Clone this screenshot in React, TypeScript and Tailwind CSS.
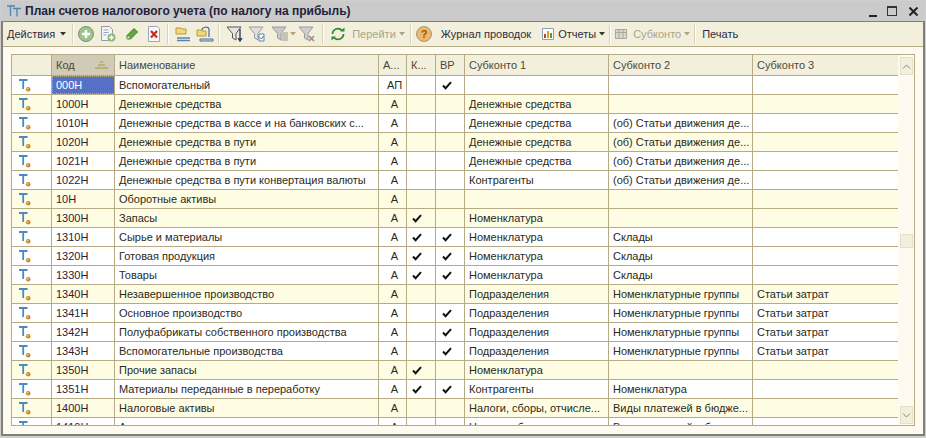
import React from "react";

type Row = {
  code: string;
  name: string;
  a: string;
  k?: boolean;
  vr?: boolean;
  s1?: string;
  s2?: string;
  s3?: string;
  folder?: boolean;
};

const rows: Row[] = [
  { code: "000Н", name: "Вспомогательный", a: "АП", vr: true },
  { code: "1000Н", name: "Денежные средства", a: "А", s1: "Денежные средства", folder: true },
  { code: "1010Н", name: "Денежные средства в кассе и на банковских с...", a: "А", s1: "Денежные средства", s2: "(об) Статьи движения де..." },
  { code: "1020Н", name: "Денежные средства в пути", a: "А", s1: "Денежные средства", s2: "(об) Статьи движения де...", folder: true },
  { code: "1021Н", name: "Денежные средства в пути", a: "А", s1: "Денежные средства", s2: "(об) Статьи движения де..." },
  { code: "1022Н", name: "Денежные средства в пути конвертация валюты", a: "А", s1: "Контрагенты", s2: "(об) Статьи движения де..." },
  { code: "10Н", name: "Оборотные активы", a: "А", folder: true },
  { code: "1300Н", name: "Запасы", a: "А", k: true, s1: "Номенклатура", folder: true },
  { code: "1310Н", name: "Сырье и материалы", a: "А", k: true, vr: true, s1: "Номенклатура", s2: "Склады" },
  { code: "1320Н", name: "Готовая продукция", a: "А", k: true, vr: true, s1: "Номенклатура", s2: "Склады" },
  { code: "1330Н", name: "Товары", a: "А", k: true, vr: true, s1: "Номенклатура", s2: "Склады" },
  { code: "1340Н", name: "Незавершенное производство", a: "А", s1: "Подразделения", s2: "Номенклатурные группы", s3: "Статьи затрат", folder: true },
  { code: "1341Н", name: "Основное производство", a: "А", vr: true, s1: "Подразделения", s2: "Номенклатурные группы", s3: "Статьи затрат" },
  { code: "1342Н", name: "Полуфабрикаты собственного производства", a: "А", vr: true, s1: "Подразделения", s2: "Номенклатурные группы", s3: "Статьи затрат" },
  { code: "1343Н", name: "Вспомогательные производства", a: "А", vr: true, s1: "Подразделения", s2: "Номенклатурные группы", s3: "Статьи затрат" },
  { code: "1350Н", name: "Прочие запасы", a: "А", k: true, s1: "Номенклатура", folder: true },
  { code: "1351Н", name: "Материалы переданные в переработку", a: "А", k: true, vr: true, s1: "Контрагенты", s2: "Номенклатура" },
  { code: "1400Н", name: "Налоговые активы", a: "А", s1: "Налоги, сборы, отчисле...", s2: "Виды платежей в бюдже...", folder: true },
  { code: "1410Н", name: "Акцизы", a: "А", s1: "Налоги, сборы, отчисле...", s2: "Виды платежей в бюдже..." },
];

const gridCols = "grid grid-cols-[40px_63px_264px_28px_29px_29px_144px_144px_145px]";

const AccountIcon = () => (
  <svg width="16" height="16" viewBox="0 0 16 16">
    <path d="M1 3h8.5M5.2 3v9" stroke="#4a8ac0" strokeWidth="1.8" fill="none" />
    <circle cx="10.2" cy="12.3" r="2.3" fill="#c4892c" />
    <circle cx="9.7" cy="11.8" r="0.9" fill="#f0d08a" />
  </svg>
);

const Check = () => (
  <svg width="10" height="9" viewBox="0 0 10 9">
    <path d="M1 4.5L3.6 7.2L9 1.2" stroke="#111" strokeWidth="2" fill="none" />
  </svg>
);

const Caret = ({ color = "#333", className = "" }: { color?: string; className?: string }) => (
  <svg width="6" height="4" viewBox="0 0 6 4" className={className}>
    <path d="M0 0h6L3 3.5z" fill={color} />
  </svg>
);

const Sep = ({ className = "" }: { className?: string }) => (
  <div className={`h-[20px] w-[2px] border-l border-[#d8d3b8] border-r-0 bg-white ${className}`} />
);

const Funnel = ({ color, dark }: { color: string; dark?: boolean }) => (
  <path d="M1 2h14L10 8.5V15L6.5 13V8.5z" fill={color} stroke={dark ? "#555" : "#9a9a9a"} strokeWidth="1" />
);

const cell = "flex items-center overflow-hidden whitespace-nowrap border-r border-[#b5ab84] pl-[4px]";

export default function App() {
  return (
    <div className="flex h-[438px] w-[926px] flex-col bg-[#cfcfcf] px-[1px] pt-[1px] pb-[2px] text-[11px] text-[#2b2a20] [font-family:'Liberation_Sans',Arial,sans-serif]">
      <div className="flex h-[20px] shrink-0 items-center bg-[#cbcbcb] pl-[5px] pr-[7px]">
        <svg width="16" height="14" viewBox="0 0 16 14">
          <path d="M1 2h8M4.5 2v10" stroke="#4a87b5" strokeWidth="1.3" fill="none" />
          <path d="M7 4.5h8M11 4.5v8" stroke="#4a87b5" strokeWidth="1.3" fill="none" />
        </svg>
        <span className="ml-[3px] text-[12px] font-bold text-[#22223a]">План счетов налогового учета (по налогу на прибыль)</span>
        <div className="ml-auto flex items-center">
          <div className="mt-[9px] h-[2px] w-[8px] bg-[#222]" />
          <div className="ml-[10px] h-[10px] w-[10px] border border-[#333] border-t-2" />
          <svg width="9" height="9" viewBox="0 0 9 9" className="ml-[12px]">
            <path d="M0.5 0.5l8 8M8.5 0.5l-8 8" stroke="#222" strokeWidth="2" />
          </svg>
        </div>
      </div>

      <div className="flex min-h-0 flex-1 flex-col border-x-2 border-b-2 border-t border-[#808078] bg-[#fffaef]">
        <div className="flex h-[25px] shrink-0 items-center border-b border-[#b5ab84] bg-[#f3efdd] pl-[4px] text-[#2d2c3c]">
          <span>Действия</span>
          <Caret className="ml-[5px]" />
          <Sep className="ml-[6px]" />
          <svg width="18" height="18" viewBox="0 0 18 18" className="ml-[3px]">
            <circle cx="9" cy="9" r="7.5" fill="#9ec48e" stroke="#7d8f78" />
            <path d="M9 5v8M5 9h8" stroke="#fff" strokeWidth="2.4" />
          </svg>
          <svg width="18" height="18" viewBox="0 0 18 18" className="ml-[4px]">
            <path d="M2.5 1.5h8l3 3v11h-11z" fill="#f4f4f4" stroke="#9a9a9a" />
            <path d="M4.5 5h5M4.5 7.5h5M4.5 10h3" stroke="#8fa6c8" />
            <circle cx="12.5" cy="12.5" r="4" fill="#8fb880" />
            <path d="M12.5 10.2v4.6M10.2 12.5h4.6" stroke="#fff" strokeWidth="1.5" />
          </svg>
          <svg width="16" height="16" viewBox="0 0 16 16" className="ml-[7px]">
            <path d="M3 9.5L10 2.5l3.5 3.5L6.5 13H3z" fill="#5fa83f" stroke="#3f7f2a" />
            <path d="M3 13l1-3 2 2z" fill="#e8e0c0" />
          </svg>
          <svg width="16" height="18" viewBox="0 0 16 18" className="ml-[6px]">
            <path d="M2.5 1.5h9l2 2v13h-11z" fill="#f6f7fa" stroke="#9aa6bb" />
            <path d="M5 6l6 6.5M11 6l-6 6.5" stroke="#cc2a1e" strokeWidth="2.2" />
          </svg>
          <Sep className="ml-[5px]" />
          <svg width="18" height="18" viewBox="0 0 18 18" className="ml-[5px]">
            <path d="M2 3h5l1 1h4v5H2z" fill="#f3d878" stroke="#b89a3a" />
            <path d="M3 13h13M3 15.5h13" stroke="#5a84b0" strokeWidth="1.4" />
          </svg>
          <svg width="18" height="18" viewBox="0 0 18 18" className="ml-[4px]">
            <path d="M1 5h4l1 1h4v5H1z" fill="#f3d878" stroke="#b89a3a" />
            <path d="M6 5c0-3 6-4 7-1v8" stroke="#4a6a8a" strokeWidth="1.2" fill="none" />
            <path d="M4 14h13v2H4z" fill="#d8e2ee" stroke="#4a6a8a" />
          </svg>
          <Sep className="ml-[4px]" />
          <svg width="19" height="18" viewBox="0 0 19 18" className="ml-[6px]">
            <Funnel color="#e6e6e6" dark />
            <path d="M14 4v11M12 13l2 3 2-3" stroke="#26345a" strokeWidth="1.3" fill="none" />
          </svg>
          <svg width="18" height="18" viewBox="0 0 18 18" className="ml-[3px]">
            <Funnel color="#dfdfdf" />
            <path d="M11 9h5v7h-5z" fill="#fff" stroke="#5a84b0" />
            <path d="M12 12.5l1.5 1.5 2-3" stroke="#3a6fa8" fill="none" />
          </svg>
          <svg width="18" height="18" viewBox="0 0 18 18" className="ml-[5px]">
            <Funnel color="#c9c9c9" />
            <path d="M10 7h7v9h-7z" fill="#c4c4b8" />
          </svg>
          <Caret color="#b3a66f" className="ml-[1px]" />
          <svg width="18" height="18" viewBox="0 0 18 18" className="ml-[2px]">
            <Funnel color="#cfcfcf" />
            <path d="M11 11l5 5M16 11l-5 5" stroke="#a58a8a" strokeWidth="1.7" />
          </svg>
          <Sep className="ml-[6px]" />
          <svg width="16" height="16" viewBox="0 0 16 16" className="ml-[6px]">
            <path d="M2.5 8a5.5 5.5 0 0 1 9.5-3.6M13.5 8a5.5 5.5 0 0 1-9.5 3.6" stroke="#2f8a2f" strokeWidth="1.8" fill="none" />
            <path d="M10 5.5h4.5V1.5zM6 10.5H1.5v4z" fill="#2f8a2f" />
          </svg>
          <span className="ml-[6px] text-[#a9a487]">Перейти</span>
          <Caret color="#a9a487" className="ml-[3px]" />
          <Sep className="ml-[5px]" />
          <svg width="18" height="18" viewBox="0 0 18 18" className="ml-[3px]">
            <circle cx="9" cy="9" r="7.5" fill="#f1b765" stroke="#9a9a88" />
            <text x="9" y="13" textAnchor="middle" fontSize="11" fontWeight="700" fill="#8a5a1a" fontFamily="Liberation Sans">?</text>
          </svg>
          <span className="ml-[8px]">Журнал проводок</span>
          <svg width="14" height="14" viewBox="0 0 14 14" className="ml-[10px]">
            <path d="M1.5 1.5h11v11h-11z" fill="#fff" stroke="#8f9fb8" />
            <path d="M4 11V7" stroke="#c83a2a" strokeWidth="2" />
            <path d="M7 11V4" stroke="#d99a2a" strokeWidth="2" />
            <path d="M10 11V6" stroke="#4f9a3f" strokeWidth="2" />
          </svg>
          <span className="ml-[3px]">Отчеты</span>
          <Caret className="ml-[3px]" />
          <Sep className="ml-[4px]" />
          <svg width="14" height="14" viewBox="0 0 14 14" className="ml-[3px]">
            <path d="M1.5 2.5h11v9h-11z" fill="#d8d8cc" stroke="#a8a89a" />
            <path d="M1.5 5.5h11M5 2.5v9M9 2.5v9" stroke="#a8a89a" />
          </svg>
          <span className="ml-[5px] text-[#a9a487]">Субконто</span>
          <Caret color="#a9a487" className="ml-[3px]" />
          <Sep className="ml-[4px]" />
          <span className="ml-[6px]">Печать</span>
        </div>

        <div className="flex min-h-0 flex-1 flex-col px-[8px] pb-[8px] pt-[7px]">
          <div className="relative flex min-h-0 flex-1 flex-col overflow-hidden border border-[#b5ab84] bg-white">
            <div className="flex h-[21px] shrink-0">
              <div className={`${gridCols} min-w-0 flex-1 border-b border-[#b5ab84] bg-[#f3efdd] text-[#4d4a33]`}>
                <div className="border-r border-[#b5ab84]" />
                <div className="flex items-center justify-between border-r border-[#b5ab84] bg-[#cfcbb6] pl-[4px] pr-[6px]">
                  <span>Код</span>
                  <svg width="13" height="8" viewBox="0 0 13 8">
                    <path d="M5 1h3M3 4h7M0 7h13" stroke="#b8a860" strokeWidth="1.5" />
                  </svg>
                </div>
                <div className={cell}>Наименование</div>
                <div className={cell}>А...</div>
                <div className={cell}>К...</div>
                <div className={cell}>ВР</div>
                <div className={cell}>Субконто 1</div>
                <div className={cell}>Субконто 2</div>
                <div className="flex items-center pl-[4px]">Субконто 3</div>
              </div>
              <div className="w-[16px] shrink-0 bg-[#fffaef]" />
            </div>
            <div className="flex min-h-0 flex-1">
              <div className="min-w-0 flex-1 overflow-hidden">
                {rows.map((r, i) => (
                  <div
                    key={r.code}
                    className={`${gridCols} h-[19px] border-b border-[#b5ab84] ${r.folder ? "bg-[#fefde3]" : "bg-white"}`}
                  >
                    <div className="flex items-center border-r border-[#b5ab84] pl-[6px]">
                      <AccountIcon />
                    </div>
                    <div className={i === 0 ? `${cell} pt-[1px] bg-[#5570c4] text-white outline-1 -outline-offset-1 outline-dotted outline-[#b5ab84]` : `${cell} pt-[1px] text-[#33202e]`}>
                      {r.code}
                    </div>
                    <div className={`${cell} pt-[1px]`}>{r.name}</div>
                    <div className={`${cell} justify-center pl-0 pt-[1px]`}>{r.a}</div>
                    <div className={`${cell} pl-[5px]`}>{r.k && <Check />}</div>
                    <div className={`${cell} pl-[6px]`}>{r.vr && <Check />}</div>
                    <div className={`${cell} pt-[1px]`}>{r.s1}</div>
                    <div className={`${cell} pt-[1px]`}>{r.s2}</div>
                    <div className="flex items-center overflow-hidden whitespace-nowrap pl-[4px] pt-[1px]">{r.s3}</div>
                  </div>
                ))}
              </div>
              <div className="flex w-[16px] shrink-0 flex-col items-center justify-between bg-[#fffaef] pb-[1px]">
                <div />
                <div className="h-[14px] w-[13px] border border-[#e3dfc8] bg-[#f3efdd]" />
                <div className="flex h-[18px] w-[13px] items-center justify-center border border-[#e3dfc8] bg-[#f3efdd]">
                  <svg width="9" height="5" viewBox="0 0 9 5">
                    <path d="M1 0.5l3.5 3.5L8 0.5" stroke="#8a8a70" fill="none" />
                  </svg>
                </div>
              </div>
            </div>
            <div className="absolute right-[1px] top-[2px] flex h-[18px] w-[13px] items-center justify-center border border-[#e3dfc8] bg-[#f3efdd]">
              <svg width="9" height="5" viewBox="0 0 9 5">
                <path d="M1 4.5L4.5 1L8 4.5" stroke="#8a8a70" fill="none" />
              </svg>
            </div>
          </div>
        </div>
      </div>
    </div>
  );
}
